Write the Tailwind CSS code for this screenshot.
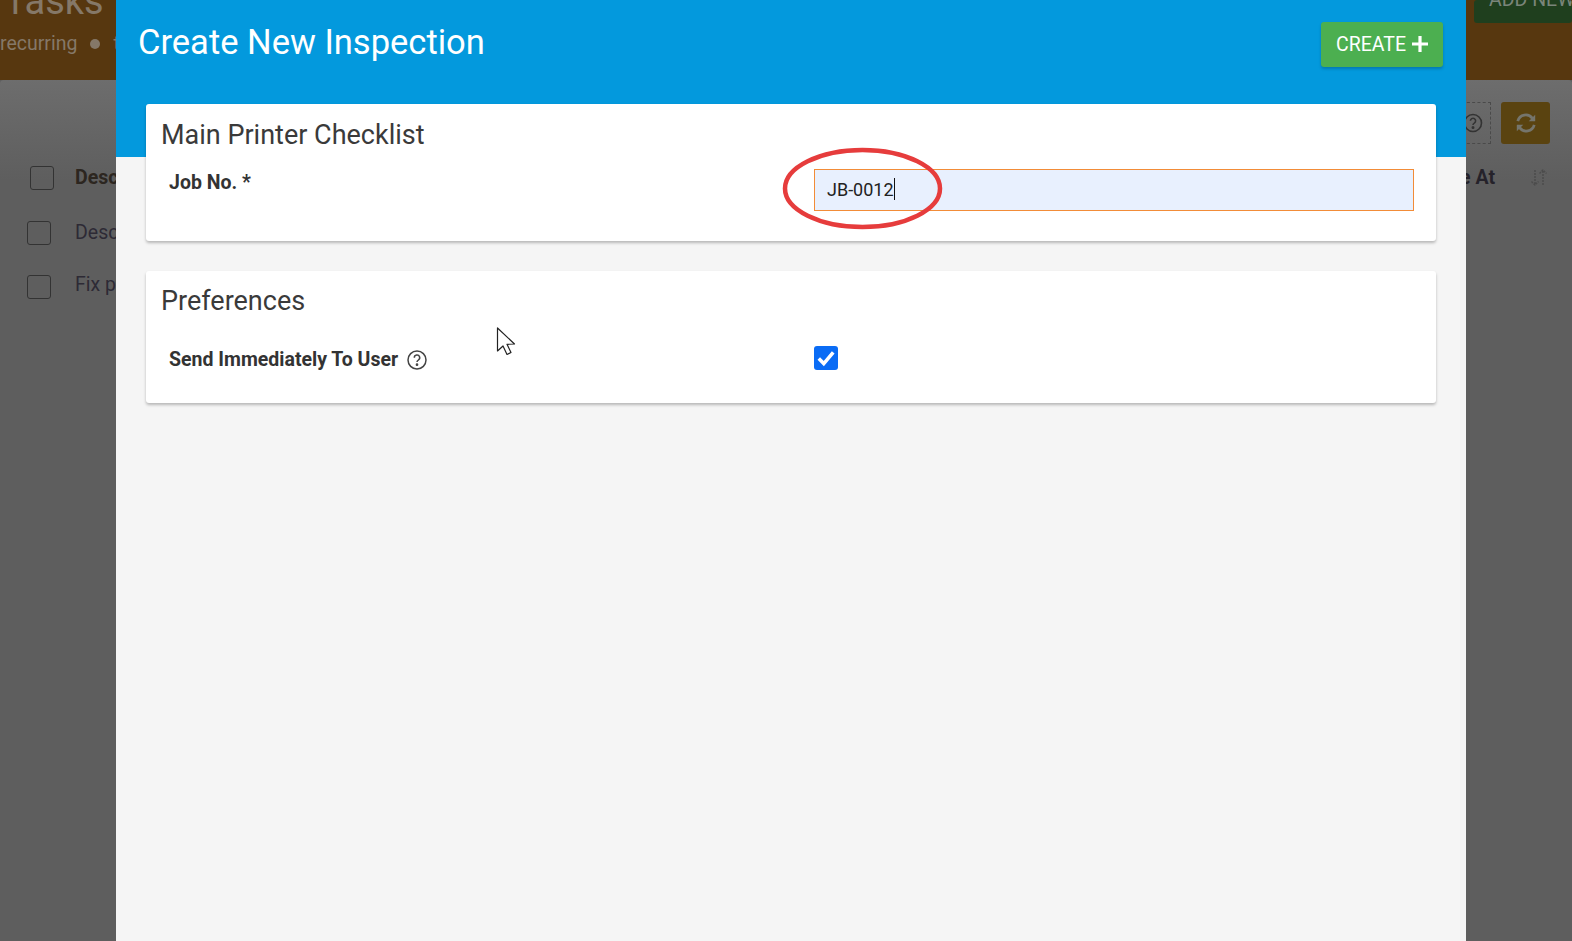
<!DOCTYPE html>
<html>
<head>
<meta charset="utf-8">
<script src="https://cdn.jsdelivr.net/npm/@tailwindcss/browser@4"></script>
</head>
<body class="m-0 overflow-hidden bg-[#5e5e5e] font-['Roboto',sans-serif]">
<div class="relative w-[1572px] h-[941px] overflow-hidden">
  <!-- Dimmed page behind the modal -->
  <div class="flex flex-col h-full">
    <header class="h-20 bg-[#57370f] flex justify-between overflow-hidden shrink-0">
      <div class="pl-[4px]">
        <div class="text-[38px] leading-[38px] mt-[-18px] text-[#857868]">Tasks</div>
        <div class="flex items-center text-[19.5px] leading-6 mt-[12px] ml-[-4px] text-[#857868]">recurring<span class="mx-[13px] w-[10px] h-[10px] rounded-full bg-[#857868]"></span>t</div>
      </div>
      <div class="w-[98px] h-[23px] bg-[#1f3f1e] rounded-[3px] overflow-hidden text-[19.5px] leading-[18px] text-[#7a857a] pl-[15px] whitespace-nowrap"><span class="block mt-[-9px]">ADD NEW</span></div>
    </header>
    <main class="flex-1 rounded-t-[4px] bg-gradient-to-b from-[#6d6d6d] to-[#5e5e5e] to-[100px] relative">
      <div class="flex justify-end gap-[10px] pt-[22px] pr-[22px]">
        <div class="w-[40px] h-[42px] border border-dashed border-[#4a4a4a] flex items-center justify-center pl-[4px]">
          <svg class="w-5 h-5" viewBox="0 0 20 20" fill="none" stroke="#333" stroke-width="1.6"><circle cx="10" cy="10" r="8.5"/><path d="M7.4 7.8a2.6 2.6 0 1 1 3.9 2.3c-.9.5-1.3 1-1.3 2"/><circle cx="10" cy="14.6" r=".7" fill="#333"/></svg>
        </div>
        <div class="w-[49px] h-[42px] bg-[#5a4310] rounded-[3px] flex items-center justify-center">
          <svg class="w-[22px] h-[22px]" viewBox="0 0 24 24" fill="none" stroke="#75756c" stroke-width="3"><path d="M3 10a9 9 0 0 1 16-3l2 2"/><path d="M21 14a9 9 0 0 1-16 3l-2-2"/><path d="M22 3v7h-7" fill="#75756c" stroke="none"/><path d="M2 21v-7h7" fill="#75756c" stroke="none"/></svg>
        </div>
      </div>
      <div class="flex items-center mt-[22px] pl-[30px] pr-[21px] h-6">
        <span class="w-6 h-6 border border-[#333] rounded-[3px]"></span>
        <span class="ml-[21px] text-[19.5px] font-bold text-[#2c2620]">Description</span>
        <span class="ml-auto text-[19.5px] font-bold text-[#25222a] mr-[34px]">Due At</span>
        <svg class="w-5 h-5 mr-[2px]" viewBox="0 0 20 20" fill="none" stroke="#4c4c4c" stroke-width="1.5" stroke-dasharray="2 1"><path d="M6 2v15M2.500 13.500 6 17l3.500-3.500M14 17V2M10.500 5.500 14 2l3.500 3.500"/></svg>
      </div>
      <div class="flex items-center mt-[31px] pl-[27px] h-6">
        <span class="w-6 h-6 border border-[#333] rounded-[3px]"></span>
        <span class="ml-6 text-[19.5px] text-[#2d2a35]">Description</span>
      </div>
      <div class="flex items-center mt-[30px] pl-[27px] h-6">
        <span class="w-6 h-6 border border-[#333] rounded-[3px]"></span>
        <span class="ml-6 mb-1 text-[19.5px] text-[#2d2a35]">Fix printer</span>
      </div>
    </main>
  </div>

  <!-- Modal -->
  <div class="absolute left-[116px] top-0 w-[1350px] h-[941px] bg-[#f5f5f5]">
    <div class="absolute inset-x-0 top-0 h-[157px] bg-[#0399dd]"></div>
    <div class="relative">
      <div class="flex justify-between items-start h-[104px]">
        <h1 class="ml-[22px] mt-[21px] text-[34.5px] leading-[42px] text-white">Create New Inspection</h1>
        <button class="mt-[22px] mr-[23px] h-[45px] w-[122px] rounded-[3px] bg-[#4caf50] text-white text-[19.5px] shadow-[0_2px_3px_rgba(0,0,0,0.2)] flex items-center justify-center gap-[6px]">CREATE
          <svg class="w-[16px] h-[16px] mb-[1px]" viewBox="0 0 15 15" fill="#fff"><path d="M6 0h3v6h6v3H9v6H6V9H0V6h6z"/></svg>
        </button>
      </div>
      <section class="mx-[30px] h-[137px] bg-white rounded-[3px] shadow-[0_2px_3px_rgba(0,0,0,0.25)] px-[15px] pt-[14px]">
        <h2 class="text-[27px] leading-[35px] text-[#3a3a3a]">Main Printer Checklist</h2>
        <div class="flex">
          <label class="w-[653px] pl-[8px] mt-[18px] text-[19.5px] leading-[24px] font-bold text-[#333]">Job No. *</label>
          <div class="w-[600px] h-[42px] mt-[16px] border border-[#f28c38] bg-[#e8f0fe] flex items-center pl-3 pb-[2px] text-[18px] text-[#222]">JB-0012<span class="w-px h-[22px] bg-[#111]"></span></div>
        </div>
      </section>
      <section class="mx-[30px] mt-[30px] h-[132px] bg-white rounded-[3px] shadow-[0_2px_3px_rgba(0,0,0,0.25)] px-[15px] pt-[13px]">
        <h2 class="text-[27px] leading-[35px] text-[#3a3a3a]">Preferences</h2>
        <div class="flex items-center mt-[27px]">
          <div class="w-[653px] pl-[8px] flex items-center pt-[2px]">
            <span class="text-[19.5px] leading-6 font-bold text-[#333]">Send Immediately To User</span>
            <svg class="ml-[9px] w-5 h-5" viewBox="0 0 20 20" fill="none" stroke="#444" stroke-width="1.5"><circle cx="10" cy="10" r="9"/><path d="M7.300 7.700a2.700 2.700 0 1 1 4 2.400c-.9.500-1.300 1-1.300 2"/><circle cx="10" cy="14.700" r=".6" fill="#444"/></svg>
          </div>
          <span class="self-start w-6 h-6 rounded-[3px] bg-[#0a6cf5] flex items-center justify-center">
            <svg class="w-5 h-5" viewBox="0 0 18 18" fill="none" stroke="#fff" stroke-width="3.200"><path d="M2.500 9.500 7 14l8.500-10"/></svg>
          </span>
        </div>
      </section>
    </div>
  </div>

  <!-- Annotation ellipse -->
  <svg class="absolute left-0 top-0 pointer-events-none" width="1572" height="941" fill="none">
    <ellipse cx="862.500" cy="188.500" rx="77.500" ry="38.500" stroke="#e63c3c" stroke-width="4.500"/>
    <path d="M497.500 328v23l5.500-5 4 8.500 4-2-4-8.200 7.500-.3z" fill="#fff" stroke="#222" stroke-width="1.200" stroke-linejoin="round"/>
  </svg>
</div>
</body>
</html>
